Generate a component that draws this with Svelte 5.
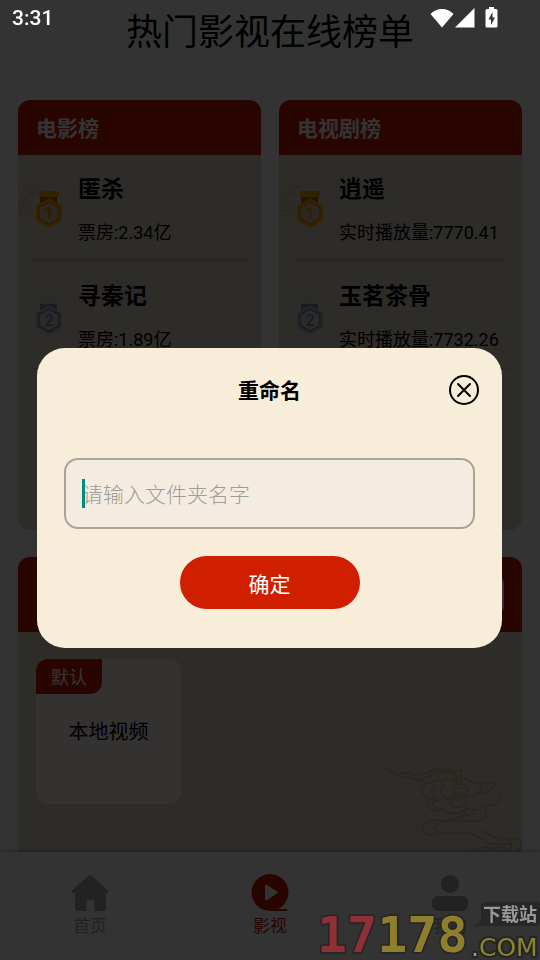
<script>
  const charts = [
    {
      title: '电影榜',
      items: [
        { name: '匿杀', stat: '票房:2.34亿' },
        { name: '寻秦记', stat: '票房:1.89亿' }
      ]
    },
    {
      title: '电视剧榜',
      items: [
        { name: '逍遥', stat: '实时播放量:7770.41' },
        { name: '玉茗茶骨', stat: '实时播放量:7732.26' }
      ]
    }
  ];
  const medals = [
    { ribbon: '#f0b400', fold: '#b86400', rim: '#ffb400', face: '#dcc8a0', line: '#f08200' },
    { ribbon: '#d4d8dc', fold: '#7f93ac', rim: '#a9bacd', face: '#cfd2d4', line: '#7188a6' }
  ];
  let name = $state('');
</script>

{#snippet medal(rank)}
  {@const m = medals[rank]}
  <svg class="medal" viewBox="0 0 26 37" aria-hidden="true">
    <path d="M4 0h18q1 0 1 2l-1 5H4L3 2q0-2 1-2z" fill={m.ribbon} />
    <path d="M4 6h17v8H4z" fill={m.fold} />
    <path d="M13 7.500 25 14q1 .5 1 2v12q0 1.500-1 2L13 37 1 30q-1-.5-1-2V16q0-1.500 1-2z" fill={m.rim} />
    <path d="M13 11l10 5.500v11L13 33.500 3 27.500v-11z" fill={m.face} stroke={m.line} stroke-width="1.500" />
    <text x="13" y="28" text-anchor="middle" fill={m.line}>{rank + 1}</text>
  </svg>
{/snippet}

{#snippet cloud()}
  <svg class="cloud" viewBox="0 0 138 84" fill="none" stroke="#c8bc90" stroke-width="1.500" aria-hidden="true">
    <path d="M1 1c8 0 10 7 18 4s10 5 17 2 10-4 16-3 14-1 25-1v10" />
    <path d="M6 4c6 5 12 4 17 5s8 4 13 3 8-6 13-4" />
    <path d="M52 14c-10-4-8-14 2-13s10 13 3 12-4-8 0-6M58 2c10-3 14 6 10 12M66 4c8 0 9 7 5 11" />
    <path d="M48 15c-14-2-14 15-2 14 6 8 14 2 14 0 8 6 16 1 17-3 8 4 15 2 16-2 6 3 12 1 14-3 6-2 4-8-3-6H88c-4-6-14-5-16 0-8-6-18-4-24 0z" />
    <path d="M52 17c-7 4-6 10 0 12M62 16c-7 3-7 9-1 13M68 20c4-6 16-5 16 2s-10 8-13 3 4-7 6-3M94 16c5 3 5 8 1 11" />
    <path d="M44 30c-4 8 4 16 14 11 8 8 22 4 25-1 7 4 16 2 17-4 9 4 20-3 15-10M52 30c-6 5-3 9 3 10M64 31c6-6 18-3 18 3s-13 7-15 2 6-6 8-2" />
    <path d="M102 38v9c0 4-6 6-12 6H64c-9 0-14 4-13 8s6 4 10 4h24c10 0 12 11 24 11h20M92 40c0 8-10 7-16 9s-8 4-20 3c-14 0-20 6-17 11s11 5 16 4M82 43c-2 6-8 8-14 8" />
    <path d="M96 63c14 2 10 8 24 8h14c5 2 5 10-2 12M122 71c7 2 7 8 2 12M88 84c8-7 16-6 20-2 6-6 14-3 16 2" />
  </svg>
{/snippet}

<div class="page">
  <h1>热门影视在线榜单</h1>

  <main>
    <div class="charts">
      {#each charts as chart}
        <section class="card paper">
          <h2>{chart.title}</h2>
          <ol>
            {#each chart.items as item, i}
              <li>
                {@render medal(i)}
                <div>
                  <h3>{item.name}</h3>
                  <p>{item.stat}</p>
                </div>
              </li>
            {/each}
          </ol>
          <svg class="wisp" viewBox="0 0 30 34" fill="none" stroke="#d8c9a4" stroke-width="1.500" aria-hidden="true">
            <path d="M4 12C3 2 14 0 15 6s-7 5-6 1M15 5c5-5 9 0 15-3M12 10c7 3 11-3 17-2M0 17c8-4 14 0 13 3H0M0 31c9 3 15-1 14-5H2c6-3 3-8-2-6" />
          </svg>
        </section>
      {/each}
    </div>

    <section class="library paper">
      <header><button type="button" aria-label="新建"></button></header>
      <div class="folder">
        <span class="tag">默认</span>
        <span class="label">本地视频</span>
      </div>
      {@render cloud()}
    </section>
  </main>

  <nav>
    <a href="#home">
      <svg viewBox="0 0 38 38" aria-hidden="true">
        <path d="M17.500 1.500q1.500-1.200 3 0L36.500 16c1.500 1.500.8 3-1 3H35v15q0 3-3 3h-8.500V28q0-2-2-2h-4q-2 0-2 2v9H7q-3 0-3-3V19h-1.500c-2 0-2.500-1.500-1-3z" fill="currentColor" />
      </svg>
      <span>首页</span>
    </a>
    <a href="#video" class="active">
      <svg viewBox="0 0 38 38" aria-hidden="true">
        <circle cx="19" cy="18.500" r="18.500" fill="currentColor" />
        <path d="M19 35h17v2H19z" fill="currentColor" />
        <path d="M14 12q0-2 2-1l10 6.500q1.500 1 0 2L16 26q-2 1-2-1z" fill="#fff" />
      </svg>
      <span>影视</span>
    </a>
    <a href="#mine">
      <svg viewBox="0 0 38 38" aria-hidden="true">
        <circle cx="19" cy="10" r="9" fill="currentColor" />
        <rect x="1" y="22" width="36" height="15" rx="6" fill="currentColor" />
      </svg>
      <span>我的</span>
    </a>
  </nav>
</div>

<div class="scrim">
  <form class="dialog" role="dialog" aria-labelledby="dialog-title" onsubmit={(e) => e.preventDefault()}>
    <header>
      <h2 id="dialog-title">重命名</h2>
      <button class="close" type="button" aria-label="关闭">
        <svg viewBox="0 0 30 30" fill="none" stroke="#000" stroke-width="2" aria-hidden="true">
          <circle cx="15" cy="15" r="14" />
          <path d="M9 9l12 12M21 9L9 21" stroke-linecap="round" />
        </svg>
      </button>
    </header>
    <div class="field">
      <input aria-label="文件夹名字" placeholder="请输入文件夹名字" bind:value={name} />
      <i class="caret"></i>
    </div>
    <button class="confirm" type="submit">确定</button>
  </form>
</div>

<div class="status">
  <span>3:31</span>
  <svg viewBox="0 0 68 22" width="68" height="22" fill="#fff" aria-hidden="true">
    <path d="M12 20.500.5 7C7 .3 17 .3 23.500 7z" />
    <path d="M25 20.500 44.500 1v19.500z" />
    <path d="M59 0h5v2h2q1.500 0 1.500 1.500v15.500q0 1.500-1.500 1.500h-9q-1.500 0-1.500-1.500V3.500Q55.500 2 57 2h2z" />
    <path d="M62.500 5 58.500 12.500h2.500V18l4-7.500h-2.500z" fill="#333" />
  </svg>
</div>

<svg class="watermark" viewBox="0 0 226 66" aria-hidden="true">
  <g class="digits">
    <text x="3" y="58"><tspan fill="#8e3036">17</tspan><tspan fill="#8f7f2c">178</tspan></text>
  </g>
  <path d="M167 13q0-5 5-5h49q5 0 5 5v14q0 5-5 5h-50l-11 1 7-7z" fill="#272727" />
  <text class="site" x="169" y="27" fill="#999">下载站</text>
  <g class="domain">
    <text x="157" y="62"><tspan fill="#999">.</tspan><tspan fill="#8a8630">COM</tspan></text>
  </g>
</svg>

<style>
  :global(body) {
    margin: 0;
    font-family: Roboto, 'Noto Sans CJK SC', sans-serif;
    color: #000;
    background: #fff;
  }
  h1, h2, h3, p, ol { margin: 0; padding: 0; font-weight: 400; }
  ol { list-style: none; }
  button { border: 0; padding: 0; font: inherit; cursor: pointer; }

  .page {
    isolation: isolate;
    height: 100vh;
    display: flex;
    flex-direction: column;
    overflow: hidden;
  }
  h1 {
    height: 100px;
    padding-top: 12px;
    box-sizing: border-box;
    text-align: center;
    font-size: 36px;
    line-height: 42px;
    flex: none;
  }
  main {
    flex: 1;
    min-height: 0;
    display: flex;
    flex-direction: column;
    gap: 27px;
    padding: 0 18px;
  }
  .paper {
    position: relative;
    overflow: hidden;
    background:
      radial-gradient(ellipse at 30% 60%, rgba(240, 205, 185, 0.25), transparent 50%),
      radial-gradient(ellipse at 80% 30%, rgba(220, 220, 205, 0.4), transparent 60%),
      #e3dccb;
  }
  .cloud {
    position: absolute;
    right: 0;
    bottom: 0;
    width: 138px;
  }
  .wisp {
    position: absolute;
    left: 0;
    top: 84px;
    width: 30px;
  }
  .charts { display: flex; gap: 18px; flex: none; }
  .card { flex: 1; height: 430px; border-radius: 12px; }
  .card h2 {
    height: 55px;
    padding: 0 18px;
    font-size: 21px;
    line-height: 58px;
    font-weight: 700;
    color: #fff;
    background: #ce1c00;
  }
  .card ol { position: relative; z-index: 1; padding: 0 12px; }
  li {
    display: flex;
    align-items: center;
    gap: 16px;
    height: 108px;
    padding: 4px 6px 0;
    box-sizing: border-box;
    border-bottom: 1px solid #c0bcb4;
    white-space: nowrap;
  }
  li:first-child { height: 106px; }
  .medal { width: 26px; height: 37px; flex: none; }
  .medal text { font: 500 16px Roboto, sans-serif; }
  h3 { font-size: 23px; line-height: 34px; font-weight: 700; }
  li p { margin-top: 12px; font-size: 18px; line-height: 28px; }

  .library { flex: 1; border-radius: 12px 12px 0 0; }
  .library header {
    display: flex;
    align-items: center;
    justify-content: flex-end;
    height: 75px;
    padding: 0 18px;
    background: #ce1c00;
  }
  .library header button { width: 96px; height: 38px; border-radius: 8px; background: #fff; }
  .folder {
    display: flex;
    flex-direction: column;
    width: 145px;
    height: 145px;
    margin: 27px 18px;
    border-radius: 12px;
    overflow: hidden;
    background: #fcfaf5;
  }
  .tag {
    align-self: flex-start;
    height: 35px;
    padding: 0 15px;
    font-size: 18px;
    line-height: 37px;
    color: #fff;
    background: #ce1c00;
    border-radius: 0 0 12px 0;
  }
  .label { margin-top: 23px; text-align: center; font-size: 20px; line-height: 30px; }

  nav {
    position: relative;
    display: flex;
    flex: none;
    height: 108px;
    background: #fff;
    box-shadow: 0 0 6px rgba(0, 0, 0, 0.4);
  }
  nav a {
    flex: 1;
    display: flex;
    flex-direction: column;
    align-items: center;
    gap: 2px;
    padding-top: 22px;
    font-size: 17px;
    line-height: 24px;
    color: #aaa;
    text-decoration: none;
  }
  nav svg { width: 38px; height: 38px; }
  nav .active { color: #ce1c00; }

  .scrim {
    position: fixed;
    inset: 0;
    display: flex;
    align-items: center;
    padding: 36px 38px 0 37px;
    background: rgba(0, 0, 0, 0.8);
  }
  .dialog {
    flex: 1;
    display: flex;
    flex-direction: column;
    height: 300px;
    padding: 0 27px;
    box-sizing: border-box;
    border-radius: 28px;
    background: #f8edd9;
  }
  .dialog header {
    display: grid;
    grid-template-columns: 30px 1fr 30px;
    align-items: center;
    height: 84px;
    margin: 0 -4px 26px;
  }
  .dialog h2 {
    grid-column: 2;
    padding-top: 2px;
    text-align: center;
    font-size: 21px;
    line-height: 30px;
    font-weight: 700;
  }
  .close { width: 30px; height: 30px; background: none; }
  .close svg { display: block; }
  .field { position: relative; }
  input {
    display: block;
    width: 100%;
    height: 71px;
    padding: 2px 16px 0;
    box-sizing: border-box;
    border: 2px solid #aaa496;
    border-radius: 14px;
    outline: 0;
    background: #f4ece0;
    font: inherit;
    font-size: 21px;
    caret-color: #008577;
  }
  input::placeholder { color: #a09c94; opacity: 1; font-weight: 300; }
  .caret {
    position: absolute;
    left: 18px;
    top: 21px;
    width: 3px;
    height: 29px;
    background: #008c7a;
  }
  .confirm {
    align-self: center;
    width: 180px;
    height: 53px;
    margin-top: 27px;
    border-radius: 27px;
    font-size: 21px;
    color: #fff;
    background: #d01f00;
  }

  .status {
    position: fixed;
    top: 0;
    left: 0;
    right: 0;
    display: flex;
    align-items: center;
    justify-content: space-between;
    height: 36px;
    padding: 0 42px 0 12px;
    color: #fff;
    font-size: 21px;
    font-weight: 500;
  }
  .watermark {
    position: fixed;
    right: 0;
    bottom: 0;
    width: 226px;
    height: 66px;
    overflow: visible;
    pointer-events: none;
  }
  .watermark text {
    stroke: #252426;
    stroke-width: 4px;
    stroke-linejoin: round;
    paint-order: stroke;
  }
  .digits text { font: 700 50px 'DejaVu Sans Mono', monospace; stroke-width: 3px; }
  .watermark .site { font: 700 18px 'Noto Sans CJK SC', sans-serif; stroke: none; }
  .domain text { font: 400 25px 'DejaVu Sans', sans-serif; }
</style>
